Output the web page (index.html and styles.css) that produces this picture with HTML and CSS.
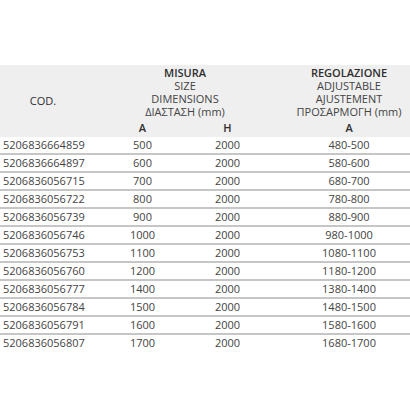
FILE: index.html
```html
<!DOCTYPE html>
<html>
<head>
<meta charset="utf-8">
<link rel="stylesheet" href="styles.css">
</head>
<body>
<table class="spec">
  <colgroup>
    <col class="c-cod"><col class="c-a"><col class="c-h"><col class="c-reg">
  </colgroup>
  <thead>
    <tr class="head-main">
      <th class="h-cod" rowspan="2">COD.</th>
      <th class="h-group" colspan="2">
        <div class="ln strong">MISURA</div>
        <div class="ln">SIZE</div>
        <div class="ln">DIMENSIONS</div>
        <div class="ln">ΔΙΑΣΤΑΣΗ (mm)</div>
      </th>
      <th class="h-group h-reg">
        <div class="ln strong">REGOLAZIONE</div>
        <div class="ln">ADJUSTABLE</div>
        <div class="ln">AJUSTEMENT</div>
        <div class="ln">ΠΡΟΣΑΡΜΟΓΗ (mm)</div>
      </th>
    </tr>
    <tr class="head-sub">
      <th>A</th><th>H</th><th class="h-reg">A</th>
    </tr>
  </thead>
  <tbody>
    <tr><td class="code">5206836664859</td><td>500</td><td>2000</td><td class="reg">480-500</td></tr>
    <tr><td class="code">5206836664897</td><td>600</td><td>2000</td><td class="reg">580-600</td></tr>
    <tr><td class="code">5206836056715</td><td>700</td><td>2000</td><td class="reg">680-700</td></tr>
    <tr><td class="code">5206836056722</td><td>800</td><td>2000</td><td class="reg">780-800</td></tr>
    <tr><td class="code">5206836056739</td><td>900</td><td>2000</td><td class="reg">880-900</td></tr>
    <tr><td class="code">5206836056746</td><td>1000</td><td>2000</td><td class="reg">980-1000</td></tr>
    <tr><td class="code">5206836056753</td><td>1100</td><td>2000</td><td class="reg">1080-1100</td></tr>
    <tr><td class="code">5206836056760</td><td>1200</td><td>2000</td><td class="reg">1180-1200</td></tr>
    <tr><td class="code">5206836056777</td><td>1400</td><td>2000</td><td class="reg">1380-1400</td></tr>
    <tr><td class="code">5206836056784</td><td>1500</td><td>2000</td><td class="reg">1480-1500</td></tr>
    <tr><td class="code">5206836056791</td><td>1600</td><td>2000</td><td class="reg">1580-1600</td></tr>
    <tr><td class="code">5206836056807</td><td>1700</td><td>2000</td><td class="reg">1680-1700</td></tr>
  </tbody>
</table>
</body>
</html>
```
FILE: styles.css
```css
html, body {
  margin: 0;
  padding: 0;
  background: #ffffff;
}
body {
  padding-top: 65px;
  font-family: "Open Sans", "Noto Sans", sans-serif;
  font-size: 11px;
  color: #444444;
}
.spec {
  width: 410px;
  border-collapse: collapse;
  table-layout: fixed;
}
.c-cod { width: 100px; }
.c-a { width: 85px; }
.c-h { width: 85px; }
.c-reg { width: 140px; }
thead th {
  background: #efefef;
  font-weight: normal;
  text-align: center;
  padding: 0;
}
.head-main th {
  padding-top: 1px;
  padding-bottom: 2px;
}
.ln {
  height: 13px;
  line-height: 13px;
}
.ln.strong {
  font-weight: 600;
  color: #2e2e2e;
}
.h-cod {
  padding-right: 14px !important;
  vertical-align: middle;
  color: #2e2e2e;
}
.h-reg {
  padding-left: 18px !important;
}
.head-sub th {
  font-weight: 600;
  height: 15px;
  line-height: 15px;
  padding-bottom: 2px;
  color: #2e2e2e;
}
tbody td {
  text-align: center;
  padding: 0;
  height: 16px;
  line-height: 16px;
  border-bottom: 2px solid #c6c6c6;
}
tbody tr:last-child td {
  border-bottom: none;
}
td.code {
  text-align: left;
  padding-left: 3px;
}
td.reg {
  padding-left: 18px;
}
```
